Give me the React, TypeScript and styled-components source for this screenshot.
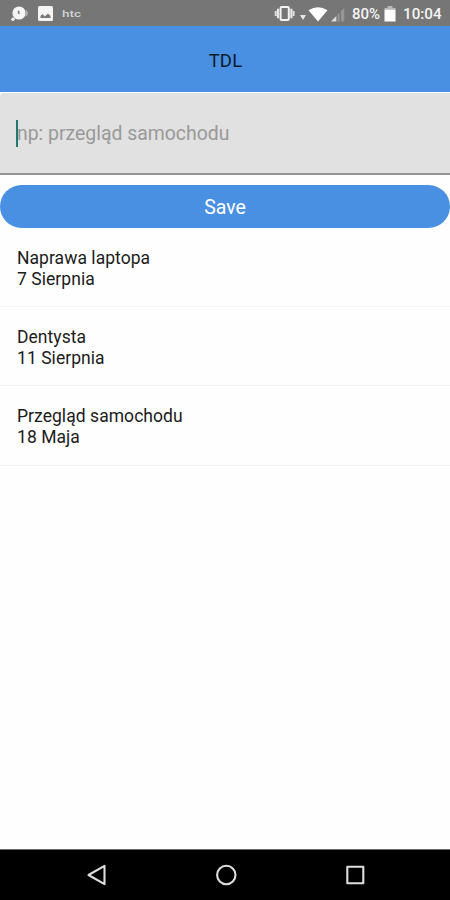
import React from "react";
import styled, { createGlobalStyle } from "styled-components";

const GlobalStyle = createGlobalStyle`
  *, *::before, *::after { box-sizing: border-box; }
  html, body { margin: 0; padding: 0; background: #fff; }
  body { font-family: Roboto, "Liberation Sans", sans-serif; color: #1c1c1c; }
`;

const Screen = styled.div`
  display: flex;
  flex-direction: column;
  width: 450px;
  height: 900px;
  background: #fefefe;
  overflow: hidden;
`;

const StatusBar = styled.div`
  display: flex;
  align-items: center;
  height: 26px;
  flex: none;
  padding: 1px 9px 0 10px;
  background: #767676;
  color: #f4f4f4;
`;

const StatusGlyph = styled.svg<{ $gap?: number }>`
  display: block;
  flex: none;
  margin-left: ${(p) => p.$gap ?? 0}px;
`;

const Carrier = styled.span`
  margin-left: 9px;
  font-size: 9px;
  line-height: 10px;
  font-weight: 500;
  color: #d2d2d2;
  transform: scaleX(1.5);
  transform-origin: left center;
`;

const Spacer = styled.div`
  flex: 1;
`;

const StatusText = styled.span<{ $width: number; $gap?: number; $size: number }>`
  width: ${(p) => p.$width}px;
  margin-left: ${(p) => p.$gap ?? 0}px;
  font-size: ${(p) => p.$size}px;
  line-height: 24px;
  font-weight: 500;
  white-space: nowrap;
`;

const Header = styled.header`
  display: flex;
  align-items: center;
  justify-content: center;
  flex: none;
  height: 66px;
  padding: 3px 0 0 1px;
  background: #4a90e2;
  color: #0b1a2b;
  font-size: 18.5px;
  font-weight: 400;
  letter-spacing: 0.2px;
`;

const Field = styled.div`
  display: flex;
  align-items: center;
  flex: none;
  height: 82px;
  margin-top: 1px;
  padding: 0 0 0 16px;
  background: #e1e1e1;
  border-bottom: 2px solid #959595;
  border-top-left-radius: 4px;
`;

const Caret = styled.span`
  width: 2px;
  height: 27px;
  margin-right: -1px;
  background: #23796f;
`;

const Placeholder = styled.span`
  font-size: 19.4px;
  line-height: 28px;
  color: #999;
  padding-top: 2px;
`;

const SaveButton = styled.button`
  flex: none;
  height: 43px;
  margin: 10px 0 0;
  padding: 2px 0 0;
  border: 0;
  border-radius: 22px;
  background: #4a90e2;
  color: #fff;
  font: 400 19.5px/24px Roboto, "Liberation Sans", sans-serif;
`;

const List = styled.ul`
  flex: 1;
  margin: 0;
  padding: 0;
  list-style: none;
`;

const Item = styled.li`
  height: 79.2px;
  padding: 20px 17px 0;
  border-bottom: 1px solid #f4f4f4;
  font-size: 17.5px;
  line-height: 20.5px;
  letter-spacing: 0.05px;
`;

const Line = styled.div``;

const NavBar = styled.nav`
  display: flex;
  align-items: center;
  justify-content: space-between;
  flex: none;
  height: 51px;
  padding: 0 83px 1px 84px;
  background: #000;
  border-top: 1px solid #666;
`;

const NavIcon = styled.svg`
  display: block;
  fill: none;
  stroke: #dedede;
  stroke-width: 2.1;
  stroke-linejoin: round;
`;

const tasks = [
  { title: "Naprawa laptopa", date: "7 Sierpnia" },
  { title: "Dentysta", date: "11 Sierpnia" },
  { title: "Przegląd samochodu", date: "18 Maja" },
];

export default function App() {
  return (
    <>
      <GlobalStyle />
      <Screen>
        <StatusBar>
          <StatusGlyph width="19" height="18" viewBox="0 0 19 18">
            <circle cx="9" cy="8" r="6.6" fill="#f5f5f5" />
            <circle cx="3" cy="14.2" r="1.8" fill="#f0f0f0" />
            <path d="M8.6 5.8v2.8M8.5 8.3h1.2" stroke="#777" strokeWidth="1.5" />
            <path d="M16 5.5q2 2.8 0 5.5" stroke="#b0b0b0" strokeWidth="1.7" fill="none" />
          </StatusGlyph>
          <StatusGlyph $gap={9} width="15" height="15" viewBox="0 0 15 15">
            <rect width="15" height="15" rx="1.5" fill="#f4f4f4" />
            <path d="M2.5 12v-2l2-2 2.3 2.5L10 7.5l2.5 2.5v2z" fill="#777" />
          </StatusGlyph>
          <Carrier>htc</Carrier>
          <Spacer />
          <StatusGlyph width="21" height="17" viewBox="0 0 21 17">
            <rect x="6.6" y="1.9" width="8.2" height="13.2" rx="1" fill="none" stroke="#f4f4f4" strokeWidth="2" />
            <path d="M4 3.8v9.4M17.4 3.8v9.4" stroke="#e8e8e8" strokeWidth="2.2" />
            <path d="M1.7 6v5M19.6 6v5" stroke="#dedede" strokeWidth="2" />
          </StatusGlyph>
          <StatusGlyph $gap={5} width="6" height="16" viewBox="0 0 6 16">
            <path d="M0 9h6L3 14z" fill="#e8e8e8" />
          </StatusGlyph>
          <StatusGlyph $gap={2} width="20" height="16" viewBox="0 0 20 16">
            <path d="M0.5 4.3Q10-2 19.5 4.3L10 15.5z" fill="#fff" />
          </StatusGlyph>
          <StatusGlyph $gap={3} width="14" height="16" viewBox="0 0 14 16">
            <path d="M0 15.5L5.3 10v5.5z" fill="#ddd" />
            <path d="M6.5 8.5l2-2v9h-2zM10 5l3.3-3v13.5H10z" fill="#969696" />
          </StatusGlyph>
          <StatusText $gap={7} $width={29} $size={15}>80%</StatusText>
          <StatusGlyph $gap={3} width="12" height="17" viewBox="0 0 12 17">
            <path d="M3.5 1h5v2H11.5v2H.5V3h3z" fill="#b9b9b9" />
            <path d="M.5 4.8h11v11.7H.5z" fill="#fff" />
          </StatusGlyph>
          <StatusText $gap={7} $width={38} $size={15.2}>10:04</StatusText>
        </StatusBar>
        <Header>TDL</Header>
        <Field>
          <Caret />
          <Placeholder>np: przegląd samochodu</Placeholder>
        </Field>
        <SaveButton type="button">Save</SaveButton>
        <List>
          {tasks.map((task) => (
            <Item key={task.title}>
              <Line>{task.title}</Line>
              <Line>{task.date}</Line>
            </Item>
          ))}
        </List>
        <NavBar>
          <NavIcon width="24" height="24" viewBox="0 0 24 24">
            <path d="M20.5 2.8v18.4L4.5 12z" />
          </NavIcon>
          <NavIcon width="24" height="24" viewBox="0 0 24 24">
            <circle cx="12.3" cy="12" r="9.2" />
          </NavIcon>
          <NavIcon width="24" height="24" viewBox="0 0 24 24">
            <rect x="4.3" y="3.8" width="16" height="16.4" />
          </NavIcon>
        </NavBar>
      </Screen>
    </>
  );
}
